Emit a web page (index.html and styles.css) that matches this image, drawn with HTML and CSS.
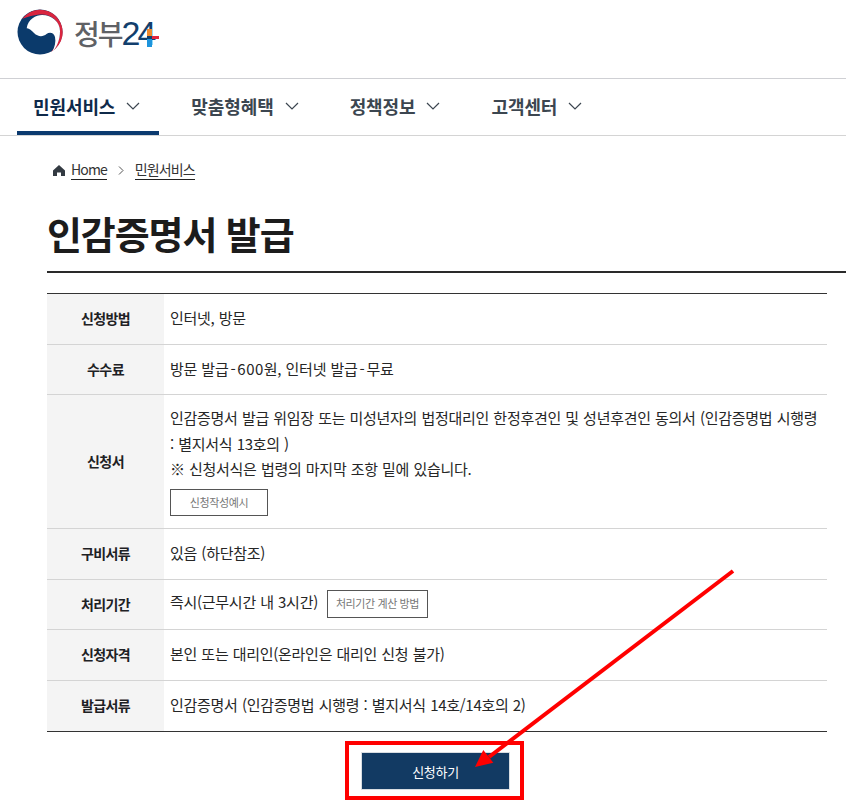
FILE: index.html
```html
<!DOCTYPE html>
<html lang="ko">
<head>
<meta charset="utf-8">
<title>인감증명서 발급</title>
<link rel="stylesheet" href="styles.css">
</head>
<body>
<header class="top">
  <a class="logo">
    <svg class="mark" width="48" height="46" viewBox="0 0 48 46">
      <circle cx="24" cy="23" r="22.500" fill="#0b3a6b"/>
      <path d="M6 10A22.500 22.500 0 1 1 35 43C41 37 44.500 29 44 22 43.500 12 35 5.500 26 5.500 18 5.500 11 8 6 10z" fill="#d9253f"/>
      <path d="M10.700 19.300C12 10 20 6 26 6 36 6 44 13 44 22 44 31 41 38 35.700 43.700 39 38 40 33 39 28 38 24 34 22.500 30.500 25 27 28 22 28 18 24 15.500 21.500 13 19 10.700 19.300z" fill="#fff"/>
    </svg>
    <span class="logo-text"><span class="logo-ko">정부</span><span class="logo-num">24</span></span>
    <svg class="plus" width="12" height="18" viewBox="0 0 12 18">
      <rect x="0" y="0" width="5" height="7" fill="#f08a2c"/>
      <rect x="0" y="7" width="5" height="3" fill="#123f6d"/>
      <rect x="5" y="7" width="7" height="3" fill="#e3253d"/>
      <rect x="0" y="10" width="5" height="8" fill="#1e94dc"/>
    </svg>
  </a>
</header>
<nav class="gnb">
  <a class="gnb-item is-active"><span>민원서비스</span><svg class="chev" width="14" height="8" viewBox="0 0 14 8"><path d="M1 1l6 6 6-6" fill="none" stroke="#3c4650" stroke-width="1.200"/></svg></a>
  <a class="gnb-item"><span>맞춤형혜택</span><svg class="chev" width="14" height="8" viewBox="0 0 14 8"><path d="M1 1l6 6 6-6" fill="none" stroke="#3c4650" stroke-width="1.200"/></svg></a>
  <a class="gnb-item"><span>정책정보</span><svg class="chev" width="14" height="8" viewBox="0 0 14 8"><path d="M1 1l6 6 6-6" fill="none" stroke="#3c4650" stroke-width="1.200"/></svg></a>
  <a class="gnb-item"><span>고객센터</span><svg class="chev" width="14" height="8" viewBox="0 0 14 8"><path d="M1 1l6 6 6-6" fill="none" stroke="#3c4650" stroke-width="1.200"/></svg></a>
</nav>
<main class="content">
  <div class="crumbs">
    <svg class="home" width="12" height="11" viewBox="0 0 12 11"><path d="M6 0L0 5.500V11h4V7.500h4V11h4V5.500z" fill="#333a42"/></svg>
    <a class="crumb">Home</a>
    <svg class="sep" width="6" height="9" viewBox="0 0 6 9"><path d="M1 .5l4 4-4 4" fill="none" stroke="#555" stroke-width="1"/></svg>
    <a class="crumb">민원서비스</a>
  </div>
  <h1 class="title">인감증명서 발급</h1>
  <table class="info">
    <tr class="r51"><th>신청방법</th><td>인터넷, 방문</td></tr>
    <tr class="r50"><th>수수료</th><td>방문 발급<span class="hy">-</span><span class="num">600</span>원, 인터넷 발급<span class="hy">-</span>무료</td></tr>
    <tr class="r134"><th>신청서</th><td class="multi">인감증명서 발급 위임장 또는 미성년자의 법정대리인 한정후견인 및 성년후견인 동의서 (인감증명법 시행령 : 별지서식 13호의 )<br>※ 신청서식은 법령의 마지막 조항 밑에 있습니다.<div class="btn-line"><a class="mini mini-wide">신청작성예시</a></div></td></tr>
    <tr class="r51"><th>구비서류</th><td>있음 (하단참조)</td></tr>
    <tr class="r50"><th>처리기간</th><td>즉시(근무시간 내 3시간)<a class="mini mini-inline">처리기간 계산 방법</a></td></tr>
    <tr class="r51"><th>신청자격</th><td>본인 또는 대리인(온라인은 대리인 신청 불가)</td></tr>
    <tr class="r51"><th>발급서류</th><td>인감증명서 (인감증명법 시행령 : 별지서식 14호/14호의 2)</td></tr>
  </table>
  <div class="actions"><a class="apply">신청하기</a></div>
</main>
<div class="mark-box"></div>
<svg class="arrow" width="846" height="808" viewBox="0 0 846 808">
  <line x1="733" y1="571" x2="489" y2="757" stroke="#ff0000" stroke-width="4"/>
  <path d="M475 767L483.300 750 493.300 762.700z" fill="#ff0000"/>
</svg>
</body>
</html>
```

FILE: styles.css
```css
* { box-sizing: border-box; }
html, body { margin: 0; padding: 0; }
body {
  width: 846px;
  height: 808px;
  overflow: hidden;
  position: relative;
  background: #fff;
  color: #1e2124;
  font-family: "Noto Sans CJK KR", "Noto Sans", sans-serif;
}
.top {
  height: 79px;
  border-bottom: 1px solid #cfd0d4;
  padding: 9px 0 0 16px;
}
.logo { display: flex; align-items: flex-start; }
.mark { display: block; flex: none; }
.logo-text {
  margin: 1px 0 0 10px;
  line-height: 46px;
  white-space: nowrap;
}
.logo-ko { color: #5f6165; font-size: 28px; font-weight: 500; letter-spacing: -2px; }
.logo-num { color: #123f6d; font-family: "Liberation Sans", sans-serif; font-size: 34px; letter-spacing: -3px; }
.plus { margin: 20px 0 0 -6px; flex: none; }
.gnb {
  height: 57px;
  border-bottom: 1px solid #d4d4d4;
  display: flex;
  padding-left: 17px;
}
.gnb-item {
  height: 56px;
  display: flex;
  align-items: center;
  gap: 11px;
  padding: 0 19px 2px 16px;
  margin-right: 16px;
  font-size: 18px;
  font-weight: 700;
  letter-spacing: -.1px;
  color: #3c4650;
  white-space: nowrap;
}
.gnb-item.is-active {
  color: #0f2a4a;
  box-shadow: inset 0 -4px 0 #0b3a6f;
}
.content { padding: 0 0 0 47px; }
.crumbs {
  display: flex;
  align-items: center;
  height: 24px;
  margin: 22px 0 0 6px;
  font-size: 14px;
  letter-spacing: -.9px;
}
.home { margin-right: 6px; }
.sep { margin: 0 11px 0 11px; }
.crumb { border-bottom: 1px solid #222; line-height: 19px; color: #333; }
.title {
  margin: 0;
  padding-top: 21px;
  height: 91px;
  border-bottom: 2px solid #2a2a2a;
  font-size: 38px;
  line-height: 60px;
  font-weight: 700;
  letter-spacing: -1.100px;
  color: #1c1c1c;
}
.info {
  margin-top: 20px;
  width: 780px;
  border-collapse: collapse;
  table-layout: fixed;
  border-top: 1px solid #333;
  border-bottom: 1px solid #333;
  font-size: 15px;
  letter-spacing: -.28px;
  word-spacing: .4px;
}
.info tr + tr { border-top: 1px solid #d4d4d4; }
.r51 { height: 51px; }
.r50 { height: 50px; }
.r134 { height: 134px; }
.info th {
  width: 117px;
  background: #f4f4f4;
  font-size: 14px;
  font-weight: 700;
  letter-spacing: -.6px;
  color: #1e2124;
  padding: 0 0 2px;
}
.info td {
  padding: 0 8px 2px 6px;
  line-height: 25.500px;
  color: #262626;
}
.info td.multi { padding-top: 10px; padding-bottom: 12px; }
.hy { padding: 0 2px; }
.num { letter-spacing: .5px; }
.btn-line { height: 34px; padding-top: 6px; }
.mini {
  display: inline-flex;
  align-items: center;
  justify-content: center;
  height: 27px;
  border: 1px solid #555;
  font-size: 11px;
  letter-spacing: -.4px;
  word-spacing: 0;
  color: #777;
  line-height: 1;
}
.mini-wide { width: 98px; }
.mini-inline { width: 101px; height: 28px; margin-left: 9px; vertical-align: middle; }
.actions {
  width: 780px;
  display: flex;
  justify-content: center;
  margin-top: 20px;
}
.apply {
  width: 149px;
  height: 38px;
  display: flex;
  align-items: center;
  justify-content: center;
  margin-left: -3px;
  background: #123a63;
  border: 1px solid #d8dde2;
  color: #fff;
  font-size: 13px;
  letter-spacing: -.3px;
}
.mark-box {
  position: absolute;
  left: 345px;
  top: 741px;
  width: 179px;
  height: 59px;
  border: 4px solid #ff0000;
}
.arrow { position: absolute; left: 0; top: 0; pointer-events: none; }
```
